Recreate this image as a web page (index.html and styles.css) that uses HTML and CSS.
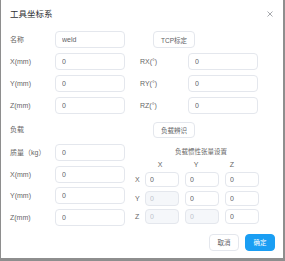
FILE: index.html
```html
<!DOCTYPE html>
<html lang="zh-CN">
<head>
    <meta charset="UTF-8">
    <title>工具坐标系</title>
    <link rel="stylesheet" href="styles.css">
</head>
<body>
    <div class="dialog">
        <div class="dialog-header">
            <span class="dialog-title">工具坐标系</span>
            <span class="dialog-close">
                <svg width="6" height="6" viewBox="0 0 6 6"><path d="M0.5 0.5 L5.5 5.5 M5.5 0.5 L0.5 5.5" stroke="#909399" stroke-width="0.8"/></svg>
            </span>
        </div>

        <div class="form-top">
            <span class="field-label">名称</span>
            <input type="text" value="weld">
            <span></span>
            <button class="btn btn-small">TCP标定</button>
            <span></span>

            <span class="field-label">X(mm)</span>
            <input type="text" value="0">
            <span></span>
            <span class="field-label">RX(°)</span>
            <input type="text" value="0">

            <span class="field-label">Y(mm)</span>
            <input type="text" value="0">
            <span></span>
            <span class="field-label">RY(°)</span>
            <input type="text" value="0">

            <span class="field-label">Z(mm)</span>
            <input type="text" value="0">
            <span></span>
            <span class="field-label">RZ(°)</span>
            <input type="text" value="0">

            <span class="field-label span-2">负载</span>
            <span></span>
            <button class="btn btn-small">负载辨识</button>
            <span></span>
        </div>

        <div class="form-bottom">
            <div class="load-fields">
                <span class="field-label">质量（kg）</span>
                <input type="text" value="0">
                <span class="field-label">X(mm)</span>
                <input type="text" value="0">
                <span class="field-label">Y(mm)</span>
                <input type="text" value="0">
                <span class="field-label">Z(mm)</span>
                <input type="text" value="0">
            </div>

            <div class="inertia">
                <div class="inertia-title">负载惯性张量设置</div>
                <div class="inertia-head">
                    <span>X</span><span>Y</span><span>Z</span>
                </div>
                <div class="inertia-grid">
                    <span>X</span>
                    <input type="text" value="0">
                    <input type="text" value="0">
                    <input type="text" value="0">
                    <span>Y</span>
                    <input type="text" value="0" disabled>
                    <input type="text" value="0">
                    <input type="text" value="0">
                    <span>Z</span>
                    <input type="text" value="0" disabled>
                    <input type="text" value="0" disabled>
                    <input type="text" value="0">
                </div>
            </div>
        </div>

        <div class="dialog-footer">
            <button class="btn">取消</button>
            <button class="btn btn-primary">确定</button>
        </div>
    </div>
</body>
</html>
```

FILE: styles.css
```css
body {
    margin: 0;
    padding: 0;
    background-color: #8e8e8e;
    font-family: "Liberation Sans", "Noto Sans CJK SC", sans-serif;
    color: #606266;
}

.dialog {
    box-sizing: border-box;
    width: 282px;
    height: 258px;
    margin: 0 2px 0 1px;
    background: #fff;
}

.dialog-header {
    display: flex;
    justify-content: space-between;
    align-items: flex-start;
    height: 31px;
    box-sizing: border-box;
    padding: 8px 9px 0 9px;
}

.dialog-title {
    font-size: 8.5px;
    line-height: 12px;
    color: #303133;
}

.dialog-close {
    display: flex;
    margin-top: 3px;
    margin-right: 1px;
}

input {
    box-sizing: border-box;
    width: 70px;
    height: 17px;
    margin: 0;
    padding: 0 6px;
    border: 1px solid #e4e7ed;
    border-radius: 4px;
    font-family: inherit;
    font-size: 7px;
    color: #606266;
    background: #fff;
    outline: none;
}

input:disabled {
    background: #f5f7fa;
    color: #c0c4cc;
}

.field-label {
    font-size: 7px;
    line-height: 17px;
    color: #666666;
}

.btn {
    box-sizing: border-box;
    height: 17px;
    padding: 0;
    border: 1px solid #e4e7ed;
    border-radius: 4px;
    background: #fff;
    font-family: inherit;
    font-size: 6.5px;
    color: #606266;
    cursor: pointer;
}

.btn-small {
    width: 42px;
    margin-left: 13px;
    justify-self: start;
}

.btn-primary {
    background: #1a9ef3;
    border-color: #1a9ef3;
    color: #fff;
}

.form-top {
    display: grid;
    grid-template-columns: 45px 70px 15px 48px 70px;
    grid-auto-rows: 17px;
    row-gap: 5px;
    padding-left: 9px;
}

.form-top > :nth-child(-n+5) {
    margin-bottom: 5px;
}

.form-top .span-2 {
    grid-column: span 2;
    line-height: 15px;
}

.form-top > :nth-last-child(-n+4) {
    margin-top: 3px;
}

.form-top > .btn:nth-last-child(2) {
    height: 16px;
}

.form-bottom {
    display: flex;
    margin-top: 8px;
    padding-left: 9px;
}

.load-fields {
    display: grid;
    grid-template-columns: 45px 70px;
    grid-auto-rows: 17px;
    row-gap: 4.5px;
}

.inertia {
    margin-left: 10px;
    padding-top: 3px;
}

.inertia-title {
    font-size: 6.5px;
    line-height: 10px;
    text-align: center;
    padding-left: 8px;
    color: #666666;
}

.inertia-head {
    display: grid;
    grid-template-columns: repeat(3, 36px);
    margin-top: 3px;
    padding-left: 7px;
    font-size: 7px;
    line-height: 10px;
    text-align: center;
    color: #666666;
}

.inertia-grid {
    display: grid;
    grid-template-columns: 10px 40px 40px 34px;
    grid-auto-rows: 15px;
    row-gap: 3.5px;
    margin-top: 2px;
    font-size: 7px;
    line-height: 15px;
    color: #666666;
}

.inertia-grid input {
    width: 34px;
    height: 15px;
    padding: 0 4px;
}

.dialog-footer {
    display: flex;
    justify-content: flex-end;
    gap: 6px;
    margin-top: 8px;
    padding-right: 8px;
}

.dialog-footer .btn {
    width: 30px;
}
```
